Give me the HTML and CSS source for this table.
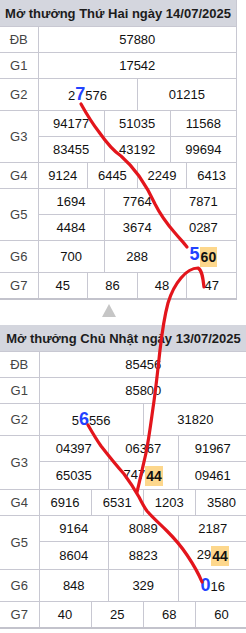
FILE: index.html
```html
<!DOCTYPE html>
<html lang="vi">
<head>
<meta charset="utf-8">
<title>Kết quả xổ số</title>
<link rel="stylesheet" href="styles.css">
</head>
<body>
<div class="page">
  <table class="kq kq1">
    <colgroup><col class="lbl-col"><col span="12"></colgroup>
    <thead><tr><th colspan="13">Mở thưởng Thứ Hai ngày 14/07/2025</th></tr></thead>
    <tbody>
      <tr><td class="lbl">ĐB</td><td colspan="12">57880</td></tr>
      <tr><td class="lbl">G1</td><td colspan="12">17542</td></tr>
      <tr class="tall"><td class="lbl">G2</td><td colspan="6">2<span class="mark">7</span>576</td><td colspan="6">01215</td></tr>
      <tr><td class="lbl" rowspan="2">G3</td><td colspan="4">94177</td><td colspan="4">51035</td><td colspan="4">11568</td></tr>
      <tr><td colspan="4">83455</td><td colspan="4">43192</td><td colspan="4">99694</td></tr>
      <tr><td class="lbl">G4</td><td colspan="3">9124</td><td colspan="3">6445</td><td colspan="3">2249</td><td colspan="3">6413</td></tr>
      <tr><td class="lbl" rowspan="2">G5</td><td colspan="4">1694</td><td colspan="4">7764</td><td colspan="4">7871</td></tr>
      <tr><td colspan="4">4484</td><td colspan="4">3674</td><td colspan="4">0287</td></tr>
      <tr class="tall"><td class="lbl">G6</td><td colspan="4">700</td><td colspan="4">288</td><td colspan="4"><span class="mark">5</span><span class="hl">60</span></td></tr>
      <tr><td class="lbl">G7</td><td colspan="3">45</td><td colspan="3">86</td><td colspan="3">48</td><td colspan="3">47</td></tr>
    </tbody>
  </table>

  <div class="sep"><span class="tri"></span></div>

  <table class="kq kq2">
    <colgroup><col class="lbl-col"><col span="12"></colgroup>
    <thead><tr><th colspan="13">Mở thưởng Chủ Nhật ngày 13/07/2025</th></tr></thead>
    <tbody>
      <tr><td class="lbl">ĐB</td><td colspan="12">85456</td></tr>
      <tr><td class="lbl">G1</td><td colspan="12">85800</td></tr>
      <tr class="tall"><td class="lbl">G2</td><td colspan="6">5<span class="mark">6</span>556</td><td colspan="6">31820</td></tr>
      <tr><td class="lbl" rowspan="2">G3</td><td colspan="4">04397</td><td colspan="4">06367</td><td colspan="4">91967</td></tr>
      <tr class="mid"><td colspan="4">65035</td><td colspan="4">747<span class="hl">44</span></td><td colspan="4">09461</td></tr>
      <tr><td class="lbl">G4</td><td colspan="3">6916</td><td colspan="3">6531</td><td colspan="3">1203</td><td colspan="3">3580</td></tr>
      <tr><td class="lbl" rowspan="2">G5</td><td colspan="4">9164</td><td colspan="4">8089</td><td colspan="4">2187</td></tr>
      <tr class="mid"><td colspan="4">8604</td><td colspan="4">8823</td><td colspan="4">29<span class="hl">44</span></td></tr>
      <tr class="tall"><td class="lbl">G6</td><td colspan="4">848</td><td colspan="4">329</td><td colspan="4"><span class="mark">0</span>16</td></tr>
      <tr><td class="lbl">G7</td><td colspan="3">40</td><td colspan="3">25</td><td colspan="3">68</td><td colspan="3">60</td></tr>
    </tbody>
  </table>

  <svg class="marks" viewBox="0 0 246 633" width="246" height="633" aria-hidden="true">
    <g fill="none" stroke="#e3151c" stroke-width="3.2" stroke-linecap="round" stroke-linejoin="round">
      <path d="M81,104 C86,113 92,123 99,132 C106,142 112,150 121,156 C129,163 134,169 139,176 C146,186 151,195 155,204 C161,216 168,225 175,233 C180,239 184,243 187,247"/>
      <path d="M137,492 C140,480 143,466 146,453 C149,438 151,422 153,408 C156,388 158,368 160,350 C162,333 164,318 168,303 C171,293 175,285 181,278 C186,272 192,268 198,268 C202,270 203,278 204,287"/>
      <path d="M88,425 C92,432 96,439 101,446 C108,455 116,465 124,474 C130,482 135,490 139,497 C142,503 144,507 147,511 C153,518 160,524 167,531 C174,538 181,546 187,555 C193,564 198,572 202,582"/>
    </g>
  </svg>
</div>
</body>
</html>
```
FILE: styles.css
```css
html, body {
  margin: 0;
  padding: 0;
  background: #fff;
}

.page {
  position: relative;
  width: 246px;
  height: 633px;
  overflow: hidden;
  font-family: "Liberation Sans", Arial, sans-serif;
  font-size: 13px;
  color: #111;
}

.kq {
  border-collapse: collapse;
  table-layout: fixed;
  border-bottom: 2px solid #c3c3cc;
}

.kq1 { width: 237px; }
.kq2 { width: 248px; }

.kq1 .lbl-col { width: 38px; }
.kq2 .lbl-col { width: 39px; }

.kq th {
  height: 26px;
  padding: 0;
  background: #d4d6de;
  color: #1c1c1c;
  font-weight: bold;
  font-size: 13px;
  text-align: center;
  border: 1px solid #c8c8d2;
  border-top: 0;
  border-left: 0;
}

.kq td {
  height: 25px;
  padding: 0;
  line-height: 15px;
  text-align: center;
  vertical-align: middle;
  border: 1px solid #c8c8d2;
  white-space: nowrap;
}

.kq td.lbl {
  border-left: 0;
  color: #444;
}

.kq tr.tall td { height: 31px; }
.kq tr.mid td { height: 27px; }

.mark {
  color: #2242ff;
  font-weight: bold;
  font-size: 18px;
  line-height: 15px;
}

.hl {
  display: inline-block;
  padding: 2px 1px;
  line-height: 16px;
  background: #fdd78c;
  font-weight: bold;
  font-size: 14px;
  vertical-align: middle;
}

.sep {
  height: 25px;
  padding-top: 4px;
  box-sizing: border-box;
}

.tri {
  display: block;
  width: 0;
  height: 0;
  margin-left: 102px;
  border-left: 7.5px solid transparent;
  border-right: 7.5px solid transparent;
  border-bottom: 13px solid #c6c6c6;
}

.marks {
  position: absolute;
  top: 0;
  left: 0;
  pointer-events: none;
}
```
